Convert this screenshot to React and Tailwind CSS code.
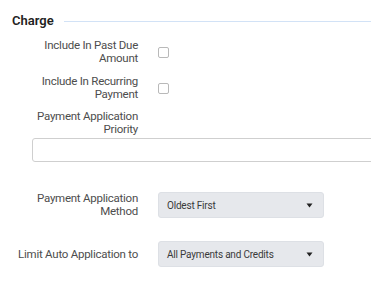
import React from 'react';

const Caret = () => (
  <svg width="7" height="5" viewBox="0 0 7 5" className="text-[#222]">
    <path d="M0.5 0.5 H6.5 L3.5 4.5 Z" fill="currentColor" />
  </svg>
);

const Select = ({ value }) => (
  <div className="flex items-center justify-between w-[166px] h-[26px] rounded-[3px] bg-[#e6e8ec] border border-[#dde0e5] pl-[8px] pr-[10px] text-[10px] tracking-[-0.2px] text-[#3a3a3a]">
    <span>{value}</span>
    <Caret />
  </div>
);

const Checkbox = () => (
  <div className="w-[11px] h-[11px] rounded-[2px] border border-[#b9b9b9] bg-white" />
);

const Label = ({ children }) => (
  <div className="w-[126px] text-right text-[11.5px] leading-[13px] tracking-[-0.25px] whitespace-nowrap text-[#4d4d4d]">
    {children}
  </div>
);

export default function App() {
  return (
    <div
      className="w-[371px] h-[282px] overflow-hidden bg-white"
      style={{ fontFamily: 'Roboto, "Open Sans", sans-serif' }}
    >
      <div className="flex items-center pl-[12px] pt-[12px]">
        <span className="text-[13px] leading-[18px] font-semibold text-[#222]">Charge</span>
        <div className="flex-1 h-px bg-[#d2e2f6] ml-[10px]" />
      </div>

      <div className="flex flex-col pl-[12px] mt-[9px]">
        <div className="flex items-center gap-[20px]">
          <Label>Include In Past Due<br />Amount</Label>
          <Checkbox />
        </div>
        <div className="flex items-center gap-[20px] mt-[10px]">
          <Label>Include In Recurring<br />Payment</Label>
          <Checkbox />
        </div>
        <div className="mt-[9px]">
          <Label>Payment Application<br />Priority</Label>
        </div>
        <div className="ml-[20px] mt-[2px] w-[360px] h-[24px] rounded-[3px] border border-[#cfcfcf] bg-white" />

        <div className="flex items-center gap-[20px] mt-[30px]">
          <Label>Payment Application<br />Method</Label>
          <Select value="Oldest First" />
        </div>
        <div className="flex items-center gap-[20px] mt-[23px]">
          <Label>Limit Auto Application to</Label>
          <Select value="All Payments and Credits" />
        </div>
      </div>
    </div>
  );
}
